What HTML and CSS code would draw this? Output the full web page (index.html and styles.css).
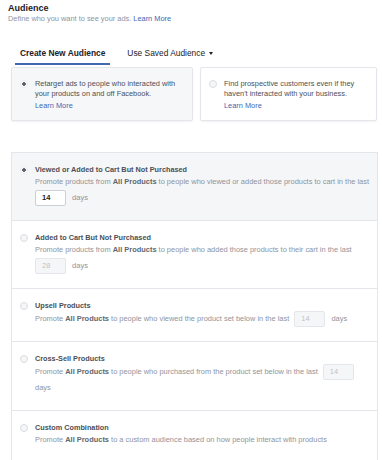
FILE: index.html
```html
<!DOCTYPE html>
<html lang="en">
<head>
    <meta charset="UTF-8">
    <title>Audience</title>
    <link rel="stylesheet" href="styles.css">
</head>
<body>

    <div class="section-head">
        <h1>Audience</h1>
        <p>Define who you want to see your ads. <a href="#">Learn More</a></p>
    </div>

    <div class="tabs">
        <div class="tab tab-active">Create New Audience</div>
        <div class="tab">Use Saved Audience <span class="caret"></span></div>
    </div>

    <div class="choices">
        <div class="choice choice-selected">
            <span class="radio radio-on"></span>
            <div class="choice-text">
                Retarget ads to people who interacted with your products on and off Facebook.
                <a href="#">Learn More</a>
            </div>
        </div>
        <div class="choice">
            <span class="radio"></span>
            <div class="choice-text">
                Find prospective customers even if they haven't interacted with your business.
                <a href="#">Learn More</a>
            </div>
        </div>
    </div>

    <div class="options">
        <div class="option option-selected">
            <span class="radio radio-on"></span>
            <div class="option-body">
                <div class="option-title">Viewed or Added to Cart But Not Purchased</div>
                <div class="option-desc">Promote products from <b>All Products</b> to people who viewed or added those products to cart in the last</div>
                <div class="option-days"><span class="days-input">14</span> days</div>
            </div>
        </div>
        <div class="option">
            <span class="radio"></span>
            <div class="option-body">
                <div class="option-title">Added to Cart But Not Purchased</div>
                <div class="option-desc">Promote products from <b>All Products</b> to people who added those products to their cart in the last</div>
                <div class="option-days"><span class="days-input days-disabled">28</span> days</div>
            </div>
        </div>
        <div class="option">
            <span class="radio"></span>
            <div class="option-body">
                <div class="option-title">Upsell Products</div>
                <div class="option-desc option-inline">Promote <b>All Products</b> to people who viewed the product set below in the last <span class="days-input days-disabled">14</span> days</div>
            </div>
        </div>
        <div class="option">
            <span class="radio"></span>
            <div class="option-body">
                <div class="option-title">Cross-Sell Products</div>
                <div class="option-desc option-inline">Promote <b>All Products</b> to people who purchased from the product set below in the last <span class="days-input days-disabled">14</span> days</div>
            </div>
        </div>
        <div class="option">
            <span class="radio"></span>
            <div class="option-body">
                <div class="option-title">Custom Combination</div>
                <div class="option-desc">Promote <b>All Products</b> to a custom audience based on how people interact with products</div>
            </div>
        </div>
    </div>

</body>
</html>
```

FILE: styles.css
```css
* {
    box-sizing: border-box;
}

body {
    margin: 0;
    padding: 2px 4px 0 8px;
    background: #fff;
    color: #1d2129;
    font-family: "Liberation Sans", Arial, sans-serif;
    font-size: 7.5px;
    line-height: 10px;
    overflow: hidden;
}

a {
    color: #4267b2;
    text-decoration: none;
}

/*--------------------
Header
--------------------*/
.section-head h1 {
    margin: 0;
    font-size: 9px;
    line-height: 12px;
    font-weight: bold;
}

.section-head p {
    margin: 0;
    font-size: 7.4px;
    color: #90949c;
}

/*--------------------
Tabs
--------------------*/
.tabs {
    display: flex;
    gap: 12px;
    margin: 23px 0 0 7px;
}

.tab {
    padding: 0 5px 4px;
    font-size: 8.4px;
    line-height: 12px;
    border-bottom: 2px solid transparent;
}

.tab-active {
    font-weight: bold;
    border-bottom-color: #4267b2;
}

.caret {
    display: inline-block;
    margin-left: 2px;
    vertical-align: 1px;
    border-left: 2.5px solid transparent;
    border-right: 2.5px solid transparent;
    border-top: 3px solid #1d2129;
}

/*--------------------
Audience choices
--------------------*/
.choices {
    display: grid;
    grid-template-columns: 182px 177px;
    gap: 7px;
    margin: 2px 0 0 3px;
}

.choice {
    display: flex;
    gap: 7px;
    height: 54px;
    padding: 11px 8px 0 8px;
    border: 1px solid #e4e6eb;
    border-radius: 2px;
    box-shadow: 0 1px 2px rgba(0, 0, 0, 0.06);
    color: #4b4f56;
    font-size: 7.4px;
}

.choice-selected {
    background: #f6f7f9;
}

.choice-text a {
    display: block;
    margin-top: 2px;
}

.radio {
    flex: 0 0 8px;
    width: 8px;
    height: 8px;
    margin-top: 1px;
    border-radius: 50%;
    border: 1px solid #dadde1;
    background: #f5f6f7;
}

.radio-on {
    border-color: #e9ebee;
    background: radial-gradient(circle, #606770 0 1.6px, #fff 2px);
}

/*--------------------
Options list
--------------------*/
.options {
    margin: 31px 0 0 3px;
    width: 367px;
    border: 1px solid #e4e6eb;
    border-bottom: none;
}

.option {
    display: flex;
    gap: 7px;
    padding: 12px 3px 14px 8px;
    border-bottom: 1px solid #e4e6eb;
    color: #90949c;
}

.option .radio {
    margin-top: 1px;
}

.option-selected {
    background: #f5f6f7;
}

.option-title {
    font-size: 7.3px;
    font-weight: bold;
    color: #4b4f56;
}

.option-desc {
    font-size: 7.45px;
    line-height: 14px;
}

.option-inline {
    line-height: 16px;
}

.option-desc b {
    color: #606770;
}

.option-days {
    margin-top: 1px;
    line-height: 16px;
}

.days-input {
    display: inline-block;
    width: 31px;
    height: 16px;
    margin-right: 4px;
    padding: 0 6px;
    line-height: 14px;
    vertical-align: middle;
    border: 1px solid #ccd0d5;
    border-radius: 2px;
    background: #fff;
    color: #1d2129;
    font-weight: bold;
}

.option-desc .days-input {
    margin: 0 4px 0 3px;
}

.days-disabled {
    background: #f5f6f7;
    border-color: #e4e6eb;
    color: #bec3c9;
    font-weight: normal;
}
```
